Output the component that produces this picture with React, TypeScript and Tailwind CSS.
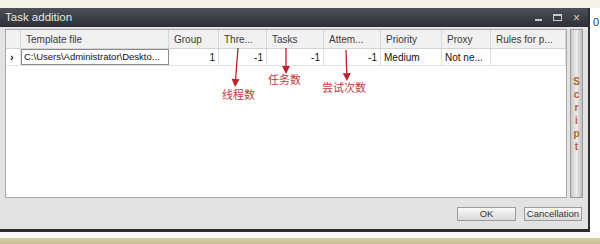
const cols = [
  { title: "", w: 15 },
  { title: "Template file", w: 148 },
  { title: "Group", w: 50 },
  { title: "Thre...", w: 48 },
  { title: "Tasks", w: 57 },
  { title: "Attem...", w: 57 },
  { title: "Priority", w: 61 },
  { title: "Proxy", w: 49 },
  { title: "Rules for p...", w: 75 },
];

const row: { text: string; right?: boolean }[] = [
  { text: "" },
  { text: "C:\\Users\\Administrator\\Deskto..." },
  { text: "1", right: true },
  { text: "-1", right: true },
  { text: "-1", right: true },
  { text: "-1", right: true },
  { text: "Medium" },
  { text: "Not ne..." },
  { text: "" },
];

const gridCols = "grid-cols-[15px_148px_50px_48px_57px_57px_61px_49px_75px]";

function Note({ x1, y1, x2, y2 }: { x1: number; y1: number; x2: number; y2: number }) {
  const dx = x2 - x1;
  const dy = y2 - y1;
  const len = Math.hypot(dx, dy);
  const ux = dx / len;
  const uy = dy / len;
  const bx = x2 - ux * 8;
  const by = y2 - uy * 8;
  return (
    <g>
      <line x1={x1} y1={y1} x2={bx} y2={by} stroke="#b4232c" strokeWidth="1.3" />
      <polygon
        points={`${x2},${y2} ${bx - uy * 4},${by + ux * 4} ${bx + uy * 4},${by - ux * 4}`}
        fill="#c0202a"
      />
    </g>
  );
}

export default function App() {
  return (
    <div
      className="relative flex h-[244px] w-[600px] flex-col overflow-hidden bg-[#f3efe4] text-[#222]"
      style={{ fontFamily: '"Liberation Sans", "Noto Sans CJK SC", sans-serif' }}
    >
      <div className="h-[8px] bg-[#f5f2ea]" />
      <div className="flex">
        <div className="flex h-[224px] w-[590px] flex-col border-r-2 border-b-[3px] border-[#2b2d31] bg-[#e3e3e3]">
          {/* title bar */}
          <div className="flex h-[19px] items-center justify-between bg-gradient-to-b from-[#4d5157] to-[#2c2f34] pl-[5px] pr-[8px]">
            <span className="text-[11.5px] text-[#e6e6e6]">Task addition</span>
            <div className="flex items-center gap-[11px] text-[#d0d0d0]">
              <span className="mt-[4px] h-[2px] w-[7px] bg-[#c8c8c8]" />
              <span className="h-[7px] w-[9px] border border-t-2 border-[#c8c8c8]" />
              <span className="text-[12px] leading-none">×</span>
            </div>
          </div>

          {/* body */}
          <div className="flex flex-1 flex-col px-[5px] pt-[2px]">
            <div className="flex h-[169px] gap-[3px]">
              <div className="relative w-[562px] border border-[#a8a8a8] bg-white">
                <div className={`grid ${gridCols} h-[19px] border-b border-[#d4d4d4] bg-[#f1f1f1]`}>
                  {cols.map((c, i) => (
                    <div
                      key={i}
                      className="flex items-center border-r border-[#d8d8d8] pl-[5px] text-[10px] text-[#3a3a3a]"
                    >
                      {c.title}
                    </div>
                  ))}
                </div>
                <div className={`grid ${gridCols} h-[17px] border-b border-[#e2e2e2]`}>
                  {row.map((c, i) => (
                    <div
                      key={i}
                      className={
                        i === 1
                          ? "flex items-center border border-[#8a8a8a] pl-[2px] text-[9.5px] text-[#111]"
                          : `flex items-center border-r border-[#e0e0e0] px-[3px] text-[10px] text-[#111] ${c.right ? "justify-end" : ""}`
                      }
                    >
                      {i === 0 ? <span className="pl-[1px] text-[11px] font-bold leading-none">›</span> : c.text}
                    </div>
                  ))}
                </div>

                {/* annotations */}
                <svg className="absolute left-0 top-0" width="562" height="169">
                  <Note x1={232} y1={18} x2={229} y2={57} />
                  <Note x1={280} y1={18} x2={280} y2={44} />
                  <Note x1={340} y1={20} x2={341} y2={51} />
                </svg>
                <span className="absolute left-[216px] top-[57px] text-[11px] text-[#c23a3a]">线程数</span>
                <span className="absolute left-[262px] top-[42px] text-[11px] text-[#c23a3a]">任务数</span>
                <span className="absolute left-[316px] top-[50px] text-[11px] text-[#c23a3a]">尝试次数</span>
              </div>

              <div className="flex w-[15px] flex-col items-center border border-[#9a9a9a] bg-gradient-to-r from-[#c9c9c9] via-[#ececec] to-[#bdbdbd] pt-[45px]">
                {"Script".split("").map((ch, i) => (
                  <span key={i} className="h-[13px] text-[10px] font-bold leading-[13px] text-[#c0602a]">
                    {ch}
                  </span>
                ))}
              </div>
            </div>

            <div className="flex flex-1 items-start justify-end gap-[8px] pr-[1px] pt-[9px]">
              <button className="h-[14px] w-[59px] border border-[#9c9c9c] bg-gradient-to-b from-[#fafafa] to-[#d9d9d9] text-[9.5px] leading-none text-[#333]">
                OK
              </button>
              <button className="h-[14px] w-[58px] border border-[#9c9c9c] bg-gradient-to-b from-[#fafafa] to-[#d9d9d9] text-[9.5px] leading-none text-[#333]">
                Cancellation
              </button>
            </div>
          </div>
        </div>
        <div className="flex-1 bg-white pl-[3px] pt-[6px] text-[11px] text-[#333]">0</div>
      </div>
      <div className="h-[6px] bg-[#fbfaf6]" />
      <div className="flex-1 bg-gradient-to-b from-[#d8cfae] to-[#c9bd94]" />
    </div>
  );
}
